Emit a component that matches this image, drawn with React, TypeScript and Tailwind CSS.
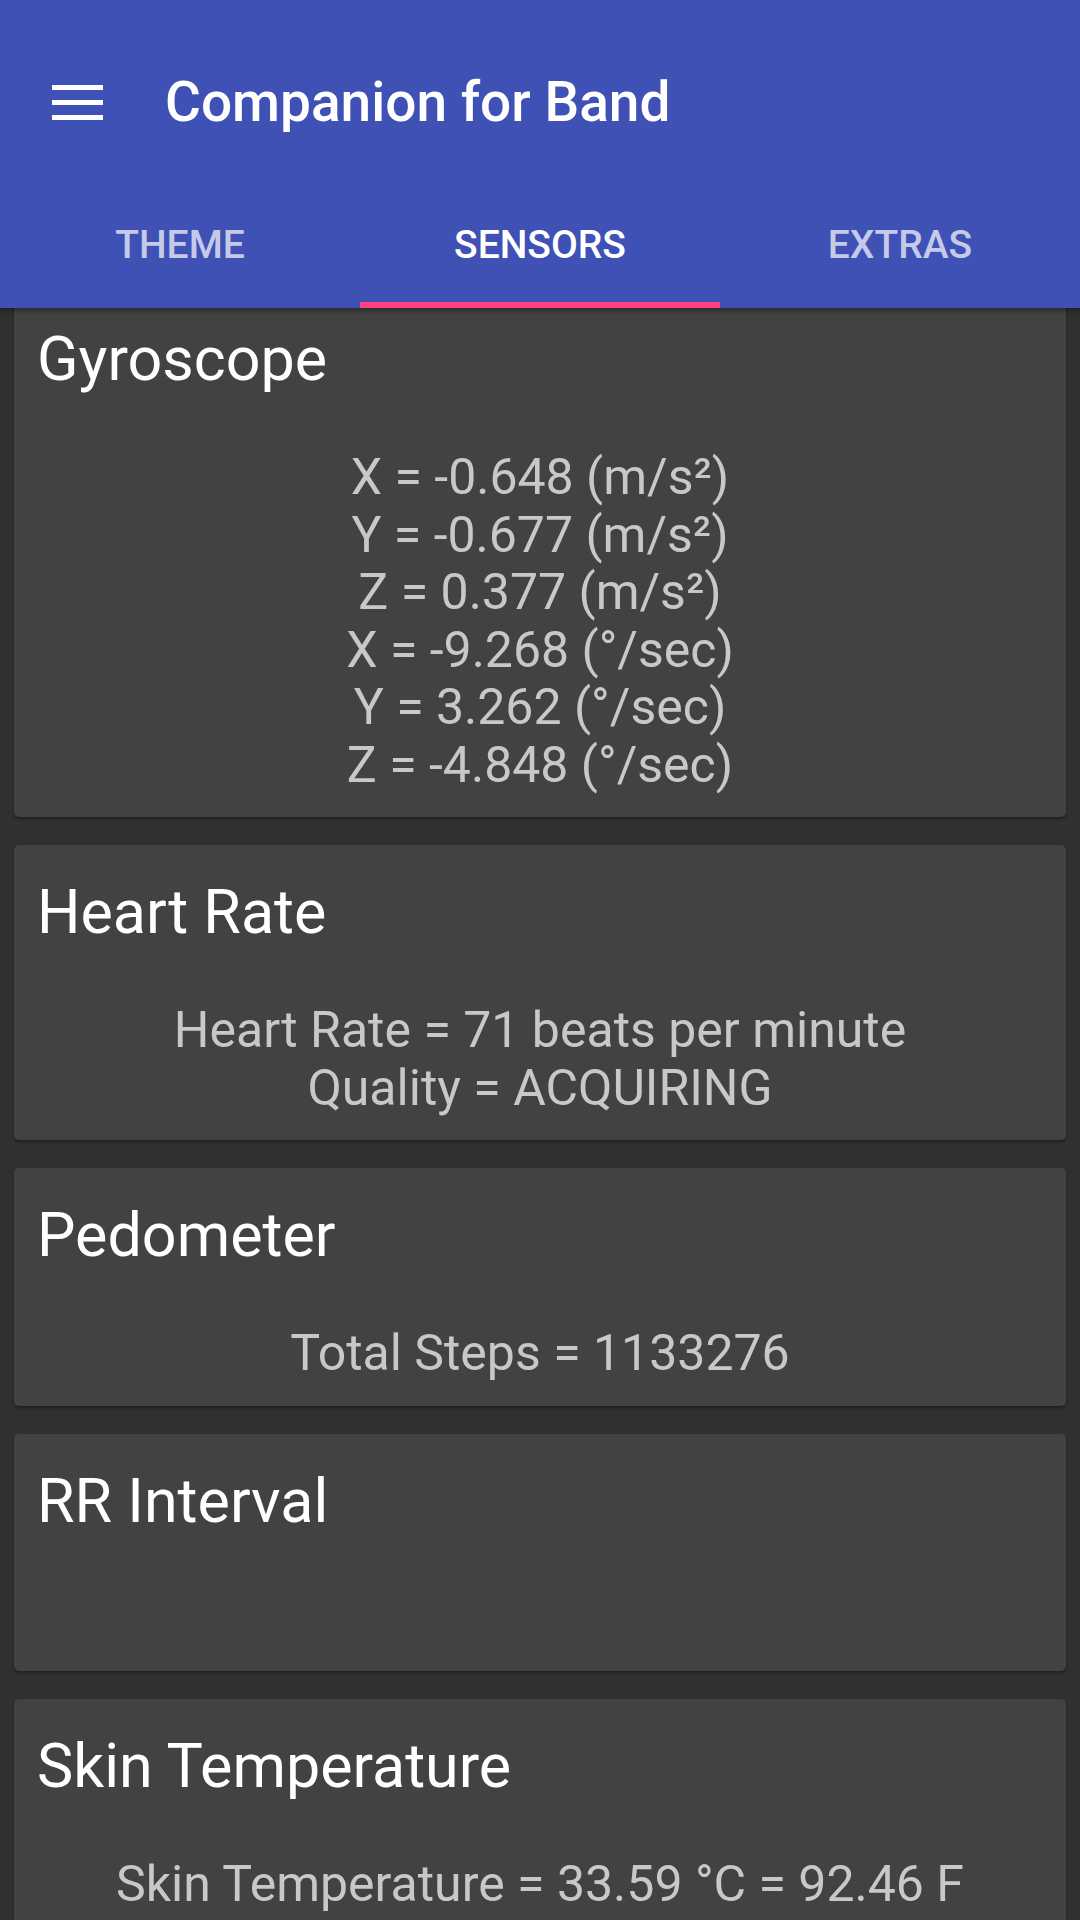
import React from "react";

const cards: { title: string; lines: string[] }[] = [
  {
    title: "Gyroscope",
    lines: [
      "X = -0.648 (m/s²)",
      "Y = -0.677 (m/s²)",
      "Z = 0.377 (m/s²)",
      "X = -9.268 (°/sec)",
      "Y = 3.262 (°/sec)",
      "Z = -4.848 (°/sec)",
    ],
  },
  {
    title: "Heart Rate",
    lines: ["Heart Rate = 71 beats per minute", "Quality = ACQUIRING"],
  },
  { title: "Pedometer", lines: ["Total Steps = 1133276"] },
  { title: "RR Interval", lines: ["\u00a0"] },
  {
    title: "Skin Temperature",
    lines: ["Skin Temperature = 33.59 °C = 92.46 F"],
  },
];

function Card({ title, lines }: { title: string; lines: string[] }) {
  return (
    <div className="mx-[14px] mb-[28px] rounded-[5px] bg-[#424242] px-[23px] pt-[30px] pb-[23px] shadow-[0_2px_3px_rgba(0,0,0,0.35)]">
      <div className="text-[61px] leading-[74px] text-white">{title}</div>
      <div className="mt-[53px] text-center text-[50px] leading-[57.5px] text-[#c8c8c8]">
        {lines.map((l, i) => (
          <div key={i}>{l}</div>
        ))}
      </div>
    </div>
  );
}

export default function App() {
  return (
    <div
      className="relative h-[1920px] w-[1080px] overflow-hidden bg-[#303030]"
      style={{ fontFamily: "Roboto, 'Noto Sans', sans-serif" }}
    >
      <header className="relative z-10 bg-[#3F51B5] shadow-[0_3px_5px_rgba(0,0,0,0.35)]">
        <div className="flex h-[204px] items-center">
          <div className="ml-[52px] flex h-[35px] w-[51px] flex-col justify-between">
            <div className="h-[5px] w-full bg-white" />
            <div className="h-[5px] w-full bg-white" />
            <div className="h-[5px] w-full bg-white" />
          </div>
          <div className="ml-[62px] text-[55px] font-medium leading-[62px] text-white">
            Companion for Band
          </div>
        </div>
        <div className="flex h-[104px]">
          {["THEME", "SENSORS", "EXTRAS"].map((t, i) => (
            <div key={t} className="flex flex-1 flex-col justify-between">
              <div
                className={
                  "pt-[19px] text-center text-[39px] font-medium leading-[44px] " +
                  (i === 1 ? "text-white" : "text-[#C5CAE9]")
                }
              >
                {t}
              </div>
              <div className={i === 1 ? "h-[6px] bg-[#FF4081]" : "h-[6px]"} />
            </div>
          ))}
        </div>
      </header>
      <main className="-mt-[16px]">
        {cards.map((c) => (
          <Card key={c.title} title={c.title} lines={c.lines} />
        ))}
      </main>
    </div>
  );
}
